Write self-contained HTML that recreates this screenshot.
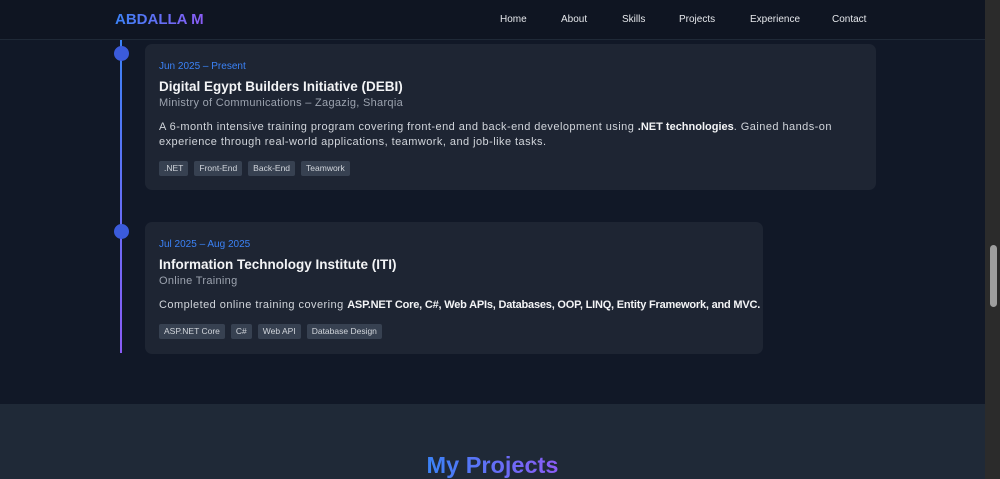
<!DOCTYPE html>
<html><head><style>
*{margin:0;padding:0;box-sizing:border-box}
body{width:1000px;height:479px;overflow:hidden;background:#111827;font-family:"Liberation Sans",sans-serif;position:relative;color:#e5e7eb}
.page{position:absolute;left:0;top:0;width:985px;height:479px;background:#111827}
nav{position:absolute;top:0;left:0;width:985px;height:40px;border-bottom:1px solid #1f2937;background:#0f1522}
.logo{position:absolute;left:115px;top:11px;font-size:15px;font-weight:bold;background:linear-gradient(90deg,#3b82f6,#8b5cf6);-webkit-background-clip:text;color:transparent}
.nl{position:absolute;top:14px;font-size:10px;color:#e5e7eb}
.line{position:absolute;left:120px;top:40px;width:2px;height:313px;background:linear-gradient(#3b82f6,#8b5cf6)}
.dot{position:absolute;left:114px;width:15px;height:15px;border-radius:50%;background:#3b5bdb}
.card{position:absolute;left:145px;background:#1e2533;border-radius:7px;padding:0 14px}
.date{position:absolute;left:14px;font-size:10px;color:#3b82f6}
.t{position:absolute;left:14px;font-size:13.5px;font-weight:bold;color:#f3f4f6;white-space:nowrap}
.s{position:absolute;left:14px;font-size:11px;color:#9ca3af;white-space:nowrap;letter-spacing:0.3px}
.d{position:absolute;left:14px;font-size:11px;color:#d1d5db;line-height:15px;white-space:nowrap;letter-spacing:0.45px}
.d b{color:#f3f4f6;letter-spacing:0}
.tags{position:absolute;left:14px;display:flex;gap:6px}
.tag{background:#374151;color:#d1d5db;font-size:8.5px;height:15px;line-height:15px;padding:0 5px;border-radius:2px}
.sec2{position:absolute;left:0;top:404px;width:985px;height:75px;background:#1f2937}
.h2{position:absolute;left:0;width:985px;top:452px;text-align:center;font-size:23.5px;font-weight:bold}
.h2 span{background:linear-gradient(90deg,#3b82f6,#8b5cf6);-webkit-background-clip:text;color:transparent}
.sb{position:absolute;left:985px;top:0;width:15px;height:479px;background:#2b2b2b}
.th{position:absolute;left:990px;top:245px;width:7px;height:62px;background:#9e9e9e;border-radius:4px}
</style></head><body>
<div class="page">
<nav><div class="logo">ABDALLA M</div>
<div class="nl" style="left:500px">Home</div>
<div class="nl" style="left:561px">About</div>
<div class="nl" style="left:622px">Skills</div>
<div class="nl" style="left:679px">Projects</div>
<div class="nl" style="left:750px">Experience</div>
<div class="nl" style="left:832px">Contact</div>
</nav>
<div class="line"></div>
<div class="dot" style="top:46px"></div>
<div class="dot" style="top:224px"></div>
<div class="card" style="top:44px;width:731px;height:146px">
<div class="date" style="top:17px">Jun 2025 – Present</div>
<div class="t" style="top:35px">Digital Egypt Builders Initiative (DEBI)</div>
<div class="s" style="top:53px">Ministry of Communications – Zagazig, Sharqia</div>
<div class="d" style="top:76px">A 6-month intensive training program covering front-end and back-end development using <b>.NET technologies</b>. Gained hands-on<br>experience through real-world applications, teamwork, and job-like tasks.</div>
<div class="tags" style="top:117px"><div class="tag">.NET</div><div class="tag">Front-End</div><div class="tag">Back-End</div><div class="tag">Teamwork</div></div>
</div>
<div class="card" style="top:222px;width:618px;height:132px">
<div class="date" style="top:17px">Jul 2025 – Aug 2025</div>
<div class="t" style="top:35px">Information Technology Institute (ITI)</div>
<div class="s" style="top:53px">Online Training</div>
<div class="d" style="top:76px">Completed online training covering <b style="letter-spacing:-0.2px">ASP.NET Core, C#, Web APIs, Databases, OOP, LINQ, Entity Framework, and MVC.</b></div>
<div class="tags" style="top:102px"><div class="tag">ASP.NET Core</div><div class="tag">C#</div><div class="tag">Web API</div><div class="tag">Database Design</div></div>
</div>
<div class="sec2"></div>
<div class="h2"><span>My Projects</span></div>
</div>
<div class="sb"></div><div class="th"></div>
</body></html>
